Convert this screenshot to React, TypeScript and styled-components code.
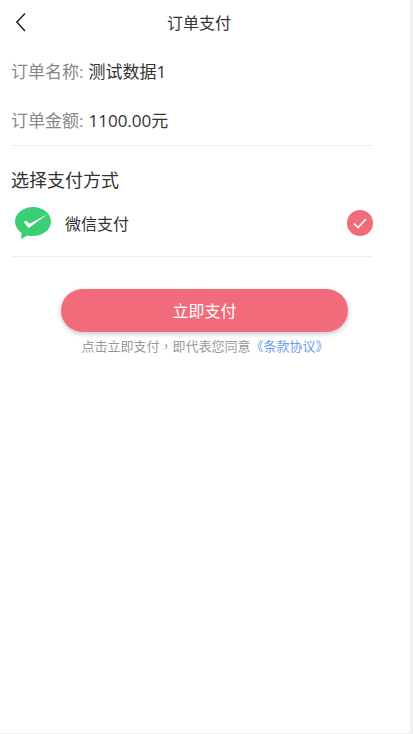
import styled, { createGlobalStyle } from 'styled-components';

const GlobalStyle = createGlobalStyle`
  html, body {
    margin: 0;
    padding: 0;
    height: 100%;
    background: #f0f0f0;
    overflow: hidden;
  }
  #root {
    height: 100%;
  }
  * {
    box-sizing: border-box;
  }
`;

const Page = styled.div`
  width: 410px;
  height: 733px;
  background: #fff;
  font-family: 'Open Sans', 'Noto Sans CJK SC', sans-serif;
  color: #333;
`;

const Header = styled.header`
  display: flex;
  align-items: center;
  justify-content: center;
  position: relative;
  width: 398px;
  height: 44px;
  font-size: 16px;
  color: #333;
`;

const BackIcon = styled.svg`
  position: absolute;
  left: 15px;
  top: 12px;
  width: 12px;
  height: 20px;
`;

const Content = styled.main`
  padding: 2px 37px 0 11px;
`;

const InfoRow = styled.div`
  display: flex;
  align-items: center;
  height: 49px;
  font-size: 17px;
  color: #333;
`;

const InfoLabel = styled.span`
  color: #888;
  margin-right: 5px;
`;

const Divider = styled.div<{ $gap?: number }>`
  height: 1px;
  margin-top: ${({ $gap = 0 }) => $gap}px;
  background: #eee;
`;

const SectionTitle = styled.h2`
  margin: 22px 0 0;
  font-size: 18px;
  font-weight: 400;
  line-height: 24px;
  color: #333;
`;

const PayMethod = styled.div`
  display: flex;
  align-items: center;
  height: 64px;
  padding: 0 0 2px 4px;
  font-size: 16px;
`;

const PayName = styled.span`
  flex: 1;
  margin-left: 14px;
`;

const CheckBadge = styled.span`
  display: flex;
  align-items: center;
  justify-content: center;
  width: 26px;
  height: 26px;
  border-radius: 50%;
  background: #f16b7b;
`;

const PayArea = styled.div`
  display: flex;
  flex-direction: column;
  align-items: center;
  padding: 32px 0 0;
`;

const PayButton = styled.button`
  width: 287px;
  height: 43px;
  margin-left: -1px;
  padding: 0 0 2px;
  border: 0;
  border-radius: 22px;
  background: #f16b7b;
  box-shadow: 0 2px 5px rgba(0, 0, 0, 0.22);
  color: #fff;
  font-family: inherit;
  font-size: 16px;
`;

const Terms = styled.p`
  margin: 5px 0 0;
  font-size: 13px;
  line-height: 18px;
  color: #999;
`;

const Comma = styled.span`
  font-family: 'Noto Sans CJK TC', sans-serif;
`;

const TermsLink = styled.a`
  color: #6b9cf0;
`;

export default function App() {
  return (
    <>
      <GlobalStyle />
      <Page>
        <Header>
          <BackIcon viewBox="0 0 12 20" fill="none" stroke="#222" strokeWidth="1.5">
            <path d="M10 1.5 L1.8 10 L10 19" />
          </BackIcon>
          订单支付
        </Header>
        <Content>
          <InfoRow>
            <InfoLabel>订单名称:</InfoLabel>
            测试数据1
          </InfoRow>
          <InfoRow>
            <InfoLabel>订单金额:</InfoLabel>
            1100.00元
          </InfoRow>
          <Divider $gap={1} />
          <SectionTitle>选择支付方式</SectionTitle>
          <PayMethod>
            <svg width="36" height="32" viewBox="0 0 36 32">
              <path
                d="M18 0C8.1 0 0 6.5 0 14.5c0 4.5 2.5 8.5 6.6 11.2L6 32l6.6-3.5c1.7.4 3.5.6 5.4.6 9.9 0 18-6.5 18-14.6S27.9 0 18 0z"
                fill="#3cce74"
              />
              <path d="M8.8 15.2l2.2-1.6 3.6 3.2L33 7 13.6 21z" fill="#fff" />
            </svg>
            <PayName>微信支付</PayName>
            <CheckBadge>
              <svg width="14" height="11" viewBox="0 0 14 11" fill="none" stroke="#fff" strokeWidth="1.6">
                <path d="M1 5.5 L5 9.5 L13 1" />
              </svg>
            </CheckBadge>
          </PayMethod>
          <Divider />
        </Content>
        <PayArea>
          <PayButton>立即支付</PayButton>
          <Terms>
            点击立即支付<Comma>，</Comma>即代表您同意<TermsLink>《条款协议》</TermsLink>
          </Terms>
        </PayArea>
      </Page>
    </>
  );
}
